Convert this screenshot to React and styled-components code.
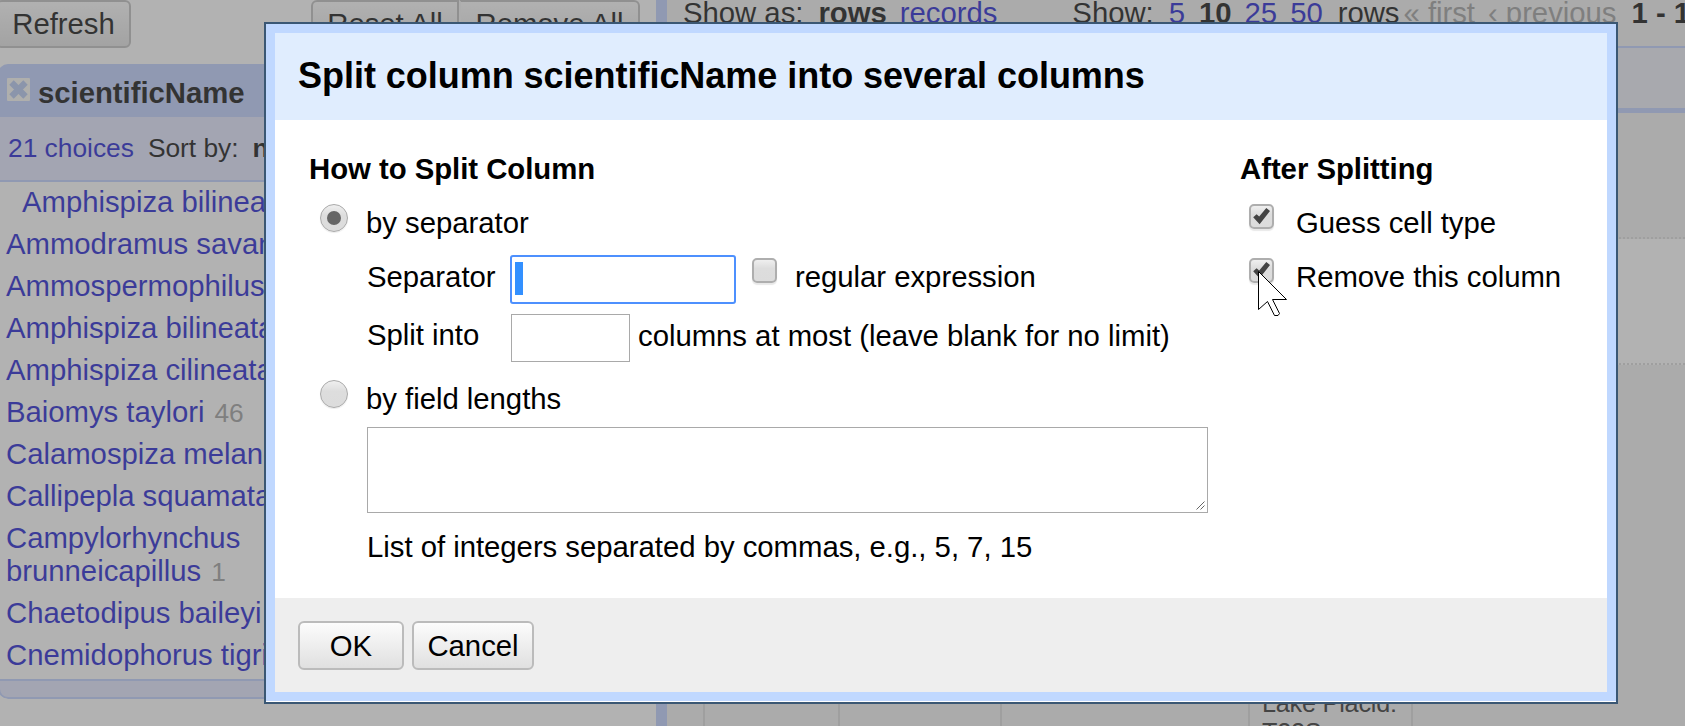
import React from 'react';
import styled, { createGlobalStyle, css } from 'styled-components';

const GlobalStyle = createGlobalStyle`
  * { box-sizing: border-box; }
  body {
    margin: 0;
    overflow: hidden;
    background: #fff;
    color: #000;
    font-family: "Liberation Sans", Arial, sans-serif;
    font-size: 29.33px;
    line-height: 33px;
    letter-spacing: -0.03px;
  }
`;

/* ---------- project page behind the dialog ---------- */

const Page = styled.div`
  position: relative;
  display: flex;
  width: 1685px;
  height: 726px;
  overflow: hidden;
`;

const FacetPanel = styled.aside`
  width: 656px;
  flex: none;
`;

const Splitter = styled.div`
  width: 11px;
  flex: none;
  background: #bcf;
`;

const Button = styled.button`
  height: 49px;
  width: ${(p) => p.$width}px;
  margin: 0;
  padding: 0 0 1px;
  border: 2px solid #bbb;
  border-radius: 6px;
  background: linear-gradient(#fcfcfc, #e0e0e0);
  font: inherit;
  letter-spacing: inherit;
  color: #000;
  white-space: nowrap;
`;

const ToolbarButton = styled(Button)`
  height: 48px;
  padding-bottom: 2px;
  ${(p) => p.$side === 'left' && 'border-radius: 6px 0 0 6px;'}
  ${(p) => p.$side === 'right' && 'border-radius: 0 6px 6px 0; border-left-color: #f4f4f4;'}
`;

const FacetToolbar = styled.div`
  display: flex;
  height: 64px;
  margin-left: -4px;
  padding-right: 16px;
`;

const ButtonGroup = styled.div`
  display: flex;
  margin-left: auto;
`;

const Facet = styled.section`
  width: 640px;
  border-radius: 10px;
  overflow: hidden;
  margin-left: -2px;
`;

const FacetTitle = styled.div`
  display: flex;
  height: 53px;
  padding: 14px 0 0 9px;
  background: #bcf;
  font-weight: bold;
  line-height: 30px;
`;

const CloseIcon = styled.svg`
  width: 23px;
  height: 23px;
  margin-right: 8px;
`;

const FacetControls = styled.div`
  display: flex;
  height: 65px;
  padding: 15px 0 0 10px;
  background: #e0e4ff;
  border-bottom: 2px solid #bcf;
  font-size: 26.4px;
`;

const Link = styled.a`
  color: #11c;
`;

const SortLabel = styled.span`
  margin: 0 14px;
`;

const Choices = styled.div`
  padding-bottom: 2px;
`;

const Choice = styled.div`
  width: 290px;
  padding: 3px 0 6px 8px;
  overflow: hidden;
  white-space: ${(p) => (p.$wrap ? 'normal' : 'nowrap')};
  text-indent: ${(p) => (p.$indent ? '16px' : 0)};
`;

const Count = styled.span`
  margin-left: 10px;
  font-size: 26.3px;
  line-height: 20px;
  color: #999;
`;

const FacetFoot = styled.div`
  height: 20px;
  background: #e0e4ff;
  border: 2px solid #bcf;
  border-radius: 0 0 10px 10px;
`;

const DataPanel = styled.main`
  flex: 1;
  min-width: 0;
  background: #f0f0f0;
  overflow: hidden;
`;

const ViewBar = styled.div`
  display: flex;
  height: 46px;
  padding-left: 16px;
  margin-top: -4px;
  margin-bottom: 4px;
  white-space: nowrap;
`;

const ViewItem = styled.span`
  flex: none;
  margin-left: ${(p) => p.$gap || 0}px;
  font-weight: ${(p) => (p.$bold ? 'bold' : 'normal')};
  color: ${(p) => (p.$link ? '#11c' : p.$muted ? '#999' : '#000')};
`;

const TableHead = styled.div`
  height: 67px;
  background: #ebedf7;
  border-top: 2px solid #bcf;
  border-bottom: 5px solid #bcf;
`;

const TableRow = styled.div`
  display: flex;
  height: ${(p) => p.$height}px;
  background: ${(p) => (p.$even ? '#fff' : '#f0f0f0')};
  border-bottom: 2px dotted #d8d8d8;
`;

const Cell = styled.div`
  flex: none;
  width: ${(p) => p.$width}px;
  padding: ${(p) => p.$top || 0}px 0 0 12px;
  border-right: 2px solid #d8d8d8;
  font-size: 25.2px;
  line-height: 29px;
  letter-spacing: -0.2px;
  color: #222;
`;

const Shade = styled.div`
  position: absolute;
  inset: 0;
  background: #666;
  opacity: 0.5;
`;

/* ---------- dialog ---------- */

const DialogFrame = styled.div`
  position: absolute;
  left: 264px;
  top: 22px;
  width: 1354px;
  height: 682px;
  border: 2px solid #3a5774;
  background: #fff;
  padding-bottom: 1px;
`;

const Dialog = styled.div`
  display: flex;
  flex-direction: column;
  height: 677px;
  border: 9px solid #c0d8ff;
`;

const DialogHeader = styled.header`
  height: 87px;
  padding-left: 23px;
  background: #e0edfe;
  font-size: 36px;
  font-weight: bold;
  line-height: 85px;
`;

const DialogBody = styled.div`
  display: flex;
  flex: 1;
  padding: 32px 0 0 34px;
`;

const DialogFooter = styled.footer`
  display: flex;
  gap: 8px;
  height: 94px;
  padding: 23px 0 0 23px;
  background: #eee;
`;

const SplitColumn = styled.div`
  width: 931px;
  flex: none;
`;

const AfterColumn = styled.div`
  flex: 1;
`;

const Heading = styled.div`
  height: 33px;
  font-weight: bold;
`;

const OptionRow = styled.label`
  display: flex;
  align-items: flex-start;
  height: 28px;
  margin: ${(p) => p.$top}px 0 0 ${(p) => p.$left}px;
  white-space: nowrap;
`;

const OptionText = styled.span`
  padding: ${(p) => p.$top || 2}px 0 0 ${(p) => p.$left || 18}px;
  white-space: nowrap;
`;

const RadioMark = styled.span`
  display: flex;
  align-items: center;
  justify-content: center;
  flex: none;
  width: 28px;
  height: 28px;
  border: 1px solid #aaa;
  border-radius: 50%;
  background: linear-gradient(#efefef, #ddd 40%, #dcdcdc);
  box-shadow: 0 1px 1px rgba(0, 0, 0, 0.08);
  ${(p) =>
    p.$checked &&
    css`
      &::after {
        content: '';
        width: 14px;
        height: 14px;
        border-radius: 50%;
        background: #666;
      }
    `}
`;

const CheckMark = styled.span`
  flex: none;
  width: 25px;
  height: 25px;
  margin: ${(p) => p.$margin || 0};
  border: 2px solid #aeaeae;
  border-radius: 5px;
  background: linear-gradient(#efefef, #ddd 40%, #dcdcdc);
  box-shadow: 0 2px 1px rgba(0, 0, 0, 0.09);

  svg {
    display: block;
    width: 21px;
    height: 21px;
    overflow: visible;
  }
`;

const FieldRow = styled.div`
  display: flex;
  align-items: flex-start;
  height: 49px;
  margin: ${(p) => p.$top}px 0 0 58px;
`;

const FieldLabel = styled.span`
  width: ${(p) => p.$width}px;
  flex: none;
  padding-top: ${(p) => p.$top}px;
`;

const TextBox = styled.div`
  flex: none;
  width: ${(p) => p.$width}px;
  height: ${(p) => p.$height}px;
  border: 1px solid #a9a9a9;
  background: #fff;
  ${(p) =>
    p.$focused &&
    css`
      border: 2px solid #4d90fe;
      border-radius: 3px;
      padding: 5px 3px;
    `}
`;

const Selection = styled.div`
  width: 8px;
  height: 33px;
  background: #3390ff;
`;

const LengthsBox = styled.div`
  display: flex;
  align-items: flex-end;
  justify-content: flex-end;
  width: 841px;
  height: 86px;
  margin: 19px 0 17px 58px;
  padding: 2px;
  border: 1px solid #a9a9a9;
`;

const Hint = styled.div`
  margin-left: 58px;
`;

const Pointer = styled.svg`
  position: absolute;
  left: 1257px;
  top: 269px;
  width: 32px;
  height: 48px;
`;

function Check({ checked, margin }) {
  return (
    <CheckMark $margin={margin}>
      {checked && (
        <svg viewBox="0 0 21 21">
          <path d="M2.2 11.3 L5.6 8.2 L8.2 10.6 L15.3 2 L19 5 L8.6 18.3 Z" fill="#444" />
        </svg>
      )}
    </CheckMark>
  );
}

const choices = [
  { name: 'Amphispiza bilineata', indent: true },
  { name: 'Ammodramus savannarum' },
  { name: 'Ammospermophilus' },
  { name: 'Amphispiza bilineata' },
  { name: 'Amphispiza cilineata' },
  { name: 'Baiomys taylori', count: 46 },
  { name: 'Calamospiza melanocorys' },
  { name: 'Callipepla squamata' },
  { name: 'Campylorhynchus brunneicapillus', count: 1 },
  { name: 'Chaetodipus baileyi' },
  { name: 'Cnemidophorus tigris' },
];

export default function App() {
  return (
    <>
      <GlobalStyle />
      <Page>
        <FacetPanel>
          <FacetToolbar>
            <ToolbarButton $width={135}>Refresh</ToolbarButton>
            <ButtonGroup>
              <ToolbarButton $width={148} $side="left">Reset All</ToolbarButton>
              <ToolbarButton $width={181} $side="right">Remove All</ToolbarButton>
            </ButtonGroup>
          </FacetToolbar>
          <Facet>
            <FacetTitle>
              <CloseIcon viewBox="0 0 23 23">
                <rect width="23" height="23" rx="1" fill="#f8f8f4" />
                <path d="M4.5 4.5 L18.5 18.5 M18.5 4.5 L4.5 18.5" stroke="#b0c4f0" strokeWidth="6.2" />
              </CloseIcon>
              <span>scientificName</span>
            </FacetTitle>
            <FacetControls>
              <Link>21 choices</Link>
              <SortLabel>Sort by:</SortLabel>
              <b>name</b>
            </FacetControls>
            <Choices>
              {choices.map((c, i) => (
                <Choice key={i} $indent={c.indent} $wrap={c.name.length > 25}>
                  <Link>{c.name}</Link>
                  {c.count && <Count>{c.count}</Count>}
                </Choice>
              ))}
            </Choices>
            <FacetFoot />
          </Facet>
        </FacetPanel>
        <Splitter />
        <DataPanel>
          <ViewBar>
            <ViewItem>Show as:</ViewItem>
            <ViewItem $gap={15} $bold>rows</ViewItem>
            <ViewItem $gap={13} $link>records</ViewItem>
            <ViewItem $gap={75}>Show:</ViewItem>
            <ViewItem $gap={15} $link>5</ViewItem>
            <ViewItem $gap={14} $bold>10</ViewItem>
            <ViewItem $gap={13} $link>25</ViewItem>
            <ViewItem $gap={13} $link>50</ViewItem>
            <ViewItem $gap={15}>rows</ViewItem>
            <ViewItem $gap={4} $muted>« first</ViewItem>
            <ViewItem $gap={13} $muted>‹ previous</ViewItem>
            <ViewItem $gap={15} $bold>1 - 10</ViewItem>
          </ViewBar>
          <TableHead />
          <TableRow $height={126} />
          <TableRow $height={126} $even />
          <TableRow $height={370}>
            <Cell $width={38} />
            <Cell $width={135} />
            <Cell $width={162} />
            <Cell $width={248} />
            <Cell $width={163} $top={324}>
              Lake Placid:
              <br />
              T22S
            </Cell>
          </TableRow>
        </DataPanel>

        <Shade />

        <DialogFrame>
          <Dialog>
            <DialogHeader>Split column scientificName into several columns</DialogHeader>
            <DialogBody>
              <SplitColumn>
                <Heading>How to Split Column</Heading>
                <OptionRow $top={19} $left={11}>
                  <RadioMark $checked />
                  <OptionText>by separator</OptionText>
                </OptionRow>
                <FieldRow $top={23}>
                  <FieldLabel $width={143} $top={5}>Separator</FieldLabel>
                  <TextBox $width={226} $height={49} $focused>
                    <Selection />
                  </TextBox>
                  <Check margin="3px 0 0 16px" />
                  <OptionText $top={5}>regular expression</OptionText>
                </FieldRow>
                <FieldRow $top={10}>
                  <FieldLabel $width={144} $top={4}>Split into</FieldLabel>
                  <TextBox $width={119} $height={48} />
                  <OptionText $top={5} $left={8}>columns at most (leave blank for no limit)</OptionText>
                </FieldRow>
                <OptionRow $top={17} $left={11}>
                  <RadioMark />
                  <OptionText>by field lengths</OptionText>
                </OptionRow>
                <LengthsBox>
                  <svg width="9" height="9" viewBox="0 0 9 9">
                    <path d="M0.5 8.5 L8.5 0.5 M4.5 8.5 L8.5 4.5" stroke="#666" fill="none" />
                  </svg>
                </LengthsBox>
                <Hint>List of integers separated by commas, e.g., 5, 7, 15</Hint>
              </SplitColumn>
              <AfterColumn>
                <Heading>After Splitting</Heading>
                <OptionRow $top={19} $left={9}>
                  <Check checked />
                  <OptionText $left={22}>Guess cell type</OptionText>
                </OptionRow>
                <OptionRow $top={26} $left={9}>
                  <Check checked />
                  <OptionText $left={22}>Remove this column</OptionText>
                </OptionRow>
              </AfterColumn>
            </DialogBody>
            <DialogFooter>
              <Button $width={106}>OK</Button>
              <Button $width={122}>Cancel</Button>
            </DialogFooter>
          </Dialog>
        </DialogFrame>

        <Pointer viewBox="0 0 32 48">
          <path
            d="M1.5 2.5 V40.5 L10.5 32.5 L17.5 46.5 H21 L22.5 44.5 L15.5 30.5 H29.5 Z"
            fill="#fff"
            stroke="#000"
          />
        </Pointer>
      </Page>
    </>
  );
}
